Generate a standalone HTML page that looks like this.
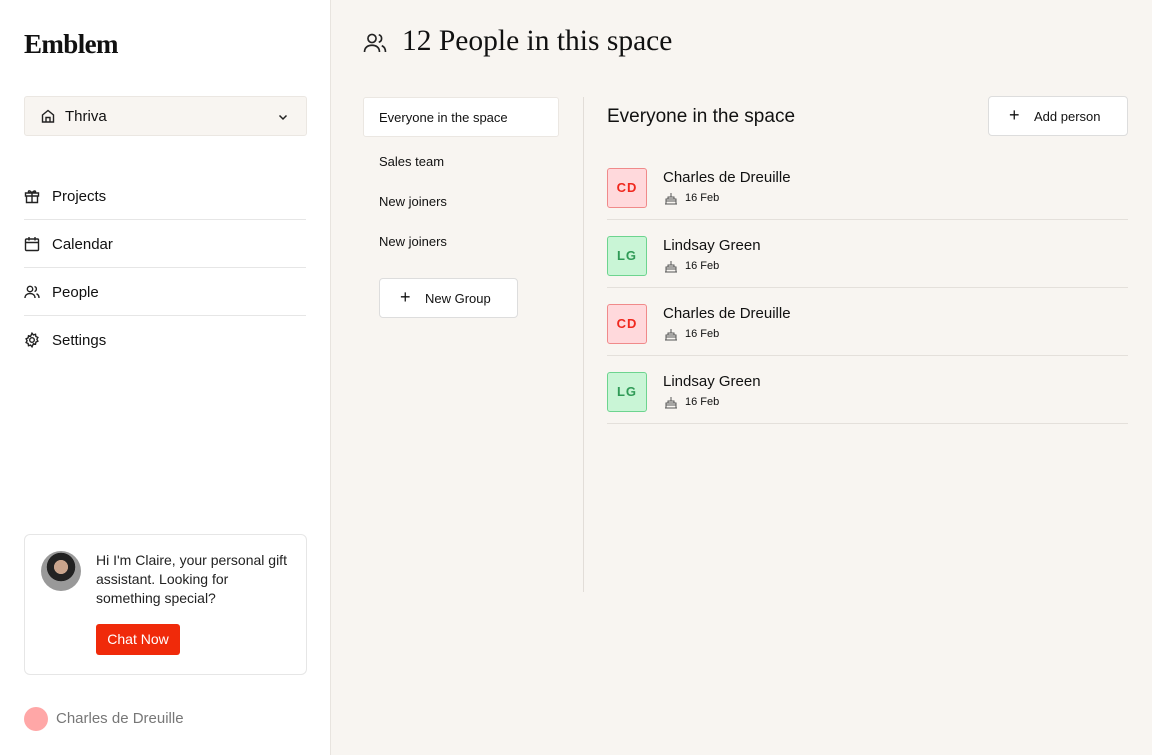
<!DOCTYPE html>
<html><head><meta charset="utf-8"><style>
*{box-sizing:border-box;margin:0;padding:0}
body{width:1152px;height:755px;overflow:hidden;font-family:"Liberation Sans",sans-serif;color:#111;background:#f8f5f1;position:relative}
.side{position:absolute;left:0;top:0;width:331px;height:755px;background:#fff;border-right:1px solid #e8e4df}
.logo{position:absolute;left:24px;top:29px;font-family:"Liberation Serif",serif;font-weight:bold;font-size:27px;letter-spacing:-0.6px}
.sel{position:absolute;left:24px;top:96px;width:283px;height:40px;background:#f8f5f1;border:1px solid #ebe7e2;border-radius:3px;font-size:15px}
.sel span{position:absolute;left:40px;top:11px}
.nav{position:absolute;left:24px;width:282px;height:48px;border-bottom:1px solid #e6e6e6;font-size:15px}
.nav span{position:absolute;left:28px;top:16px}
.nav svg,.sel svg{position:absolute}
.card{position:absolute;left:24px;top:534px;width:283px;height:141px;border:1px solid #e6e6e6;border-radius:6px;background:#fff}
.card p{position:absolute;left:71px;top:16px;width:196px;font-size:14px;line-height:19px;color:#222}
.btn{position:absolute;left:71px;top:89px;width:84px;height:31px;background:#f02a0a;color:#fff;border-radius:3px;font-size:14px;text-align:center;line-height:31px}
.av{position:absolute;left:16px;top:16px;width:40px;height:40px;border-radius:50%;background:radial-gradient(circle at 50% 40%,#c9a48c 0 22%,#222 23% 45%,#999 46%)}
.user{position:absolute;left:24px;top:707px;font-size:15px;color:#777}
.user i{display:inline-block;width:24px;height:24px;border-radius:50%;background:#ffa7a7;vertical-align:middle;margin-right:8px}
h1{position:absolute;left:402px;top:25px;font-family:"Liberation Serif",serif;font-weight:normal;font-size:29.5px}
.grp{position:absolute;left:379px;font-size:13px}
.act{position:absolute;left:363px;top:97px;width:196px;height:40px;background:#fff;border:1px solid #ebe7e2;border-radius:3px}
.ng{position:absolute;left:379px;top:278px;width:139px;height:40px;background:#fff;border:1px solid #ddd;border-radius:4px;font-size:13px}
.vl{position:absolute;left:583px;top:97px;width:1px;height:495px;background:#e2ddd8}
.h2{position:absolute;left:607px;top:106px;font-size:19px}
.ap{position:absolute;left:988px;top:96px;width:140px;height:40px;background:#fff;border:1px solid #ddd;border-radius:4px;font-size:13px}
.row{position:absolute;left:607px;width:521px;height:68px;border-bottom:1px solid #e4e0db}
.ini{position:absolute;left:0;top:16px;width:40px;height:40px;border-radius:3px;font-size:13px;font-weight:bold;text-align:center;line-height:38px;letter-spacing:1px}
.cd{background:#ffd9dc;border:1px solid #f08a8a;color:#f0281e}
.lg{background:#c9f5d6;border:1px solid #6dd48f;color:#2f9a56}
.nm{position:absolute;left:56px;top:17px;font-size:15px}
.dt{position:absolute;left:78px;top:40px;font-size:11px}
.row svg{position:absolute;left:57px;top:39px}
</style></head><body>
<div class="side">
<div class="logo">Emblem</div>
<div class="sel"><svg style="left:15px;top:11px" width="16" height="16" viewBox="0 0 16 16" fill="none" stroke="#222" stroke-width="1.4"><path d="M2.5 7 8 2.5 13.5 7V14h-11z M6 14V9.5h4V14"/></svg><span>Thriva</span><svg style="left:252px;top:14px" width="12" height="12" viewBox="0 0 12 12" fill="none" stroke="#222" stroke-width="1.5"><path d="M2.5 4.5 6 8l3.5-3.5"/></svg></div>
<div class="nav" style="top:172px"><svg style="left:0;top:16px" width="16" height="16" viewBox="0 0 16 16" fill="none" stroke="#222" stroke-width="1.4"><path d="M1.5 5h13v3h-13z M2.5 8v6.5h11V8 M8 5v9.5 M8 5C6 2 4 2.5 4.5 4 5 5 8 5 8 5c0 0 3 0 3.5-1S10 2 8 5"/></svg><span>Projects</span></div>
<div class="nav" style="top:220px"><svg style="left:0;top:16px" width="16" height="16" viewBox="0 0 16 16" fill="none" stroke="#222" stroke-width="1.4"><rect x="1.5" y="3" width="13" height="11.5" rx="1"/><path d="M1.5 6.5h13 M5 1v3.5 M11 1v3.5"/></svg><span>Calendar</span></div>
<div class="nav" style="top:268px"><svg style="left:0;top:16px" width="16" height="16" viewBox="0 0 16 16" fill="none" stroke="#222" stroke-width="1.4"><circle cx="6" cy="5" r="2.7"/><path d="M1 14c0-3 2.2-4.5 5-4.5s5 1.5 5 4.5 M10.5 2.5a2.6 2.6 0 0 1 0 5 M12.5 9.8c1.5.6 2.5 2 2.5 4.2"/></svg><span>People</span></div>
<div class="nav" style="top:316px;border:none"><svg style="left:0;top:16px" width="16" height="16" viewBox="0 0 16 16" fill="none" stroke="#222" stroke-width="1.4"><circle cx="8" cy="8" r="2.3"/><path d="M8 1.2l1.4 1.7 2.1-.6.4 2.2 2 .9-1 1.9 1 1.9-2 .9-.4 2.2-2.1-.6L8 14.8l-1.4-1.7-2.1.6-.4-2.2-2-.9 1-1.9-1-1.9 2-.9.4-2.2 2.1.6z"/></svg><span>Settings</span></div>
<div class="card"><div class="av"></div><p>Hi I'm Claire, your personal gift assistant. Looking for something special?</p><div class="btn">Chat Now</div></div>
<div class="user"><i></i>Charles de Dreuille</div>
</div>
<svg style="position:absolute;left:363px;top:31px" width="24" height="24" viewBox="0 0 16 16" fill="none" stroke="#222" stroke-width="1.1"><circle cx="6" cy="5" r="2.7"/><path d="M1 14c0-3 2.2-4.5 5-4.5s5 1.5 5 4.5 M10.5 2.5a2.6 2.6 0 0 1 0 5 M12.5 9.8c1.5.6 2.5 2 2.5 4.2"/></svg>
<h1>12 People in this space</h1>
<div class="act"></div>
<div class="grp" style="top:110px">Everyone in the space</div>
<div class="grp" style="top:154px">Sales team</div>
<div class="grp" style="top:194px">New joiners</div>
<div class="grp" style="top:234px">New joiners</div>
<div class="ng"><span style="position:absolute;left:20px;top:8px;font-size:18px">+</span><span style="position:absolute;left:45px;top:12px">New Group</span></div>
<div class="vl"></div>
<div class="h2">Everyone in the space</div>
<div class="ap"><span style="position:absolute;left:20px;top:8px;font-size:18px">+</span><span style="position:absolute;left:45px;top:12px">Add person</span></div>
<div class="row" style="top:152px"><div class="ini cd">CD</div><div class="nm">Charles de Dreuille</div><svg width="14" height="14" viewBox="0 0 14 14" fill="none" stroke="#555" stroke-width="1"><path d="M1 13h12 M2 13V8h10v5 M2 10h10 M4 8V6h6v2 M7 6V2"/></svg><div class="dt">16 Feb</div></div>
<div class="row" style="top:220px"><div class="ini lg">LG</div><div class="nm">Lindsay Green</div><svg width="14" height="14" viewBox="0 0 14 14" fill="none" stroke="#555" stroke-width="1"><path d="M1 13h12 M2 13V8h10v5 M2 10h10 M4 8V6h6v2 M7 6V2"/></svg><div class="dt">16 Feb</div></div>
<div class="row" style="top:288px"><div class="ini cd">CD</div><div class="nm">Charles de Dreuille</div><svg width="14" height="14" viewBox="0 0 14 14" fill="none" stroke="#555" stroke-width="1"><path d="M1 13h12 M2 13V8h10v5 M2 10h10 M4 8V6h6v2 M7 6V2"/></svg><div class="dt">16 Feb</div></div>
<div class="row" style="top:356px"><div class="ini lg">LG</div><div class="nm">Lindsay Green</div><svg width="14" height="14" viewBox="0 0 14 14" fill="none" stroke="#555" stroke-width="1"><path d="M1 13h12 M2 13V8h10v5 M2 10h10 M4 8V6h6v2 M7 6V2"/></svg><div class="dt">16 Feb</div></div>
</body></html>
